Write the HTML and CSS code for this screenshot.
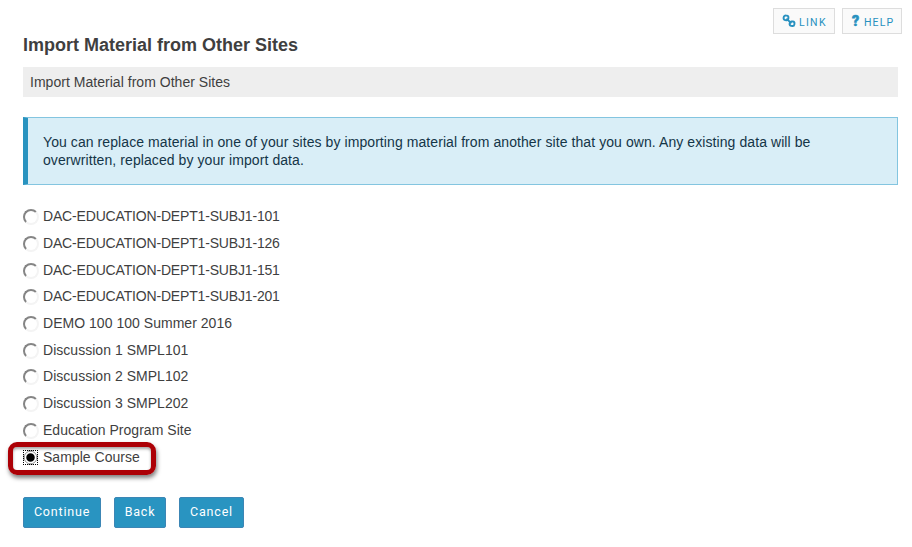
FILE: index.html
```html
<!DOCTYPE html>
<html lang="en">
<head>
<meta charset="utf-8">
<title>Import Material from Other Sites</title>
<link rel="stylesheet" href="styles.css">
</head>
<body>
<nav class="tools">
  <a class="tool link"><svg width="14" height="14" viewBox="0 0 14 14" fill="none" stroke="currentColor" stroke-width="1.9"><rect x="1.6" y="1.6" width="4.8" height="4.6" rx="2" transform="rotate(8 4 4)"/><rect x="7.6" y="7.4" width="4.8" height="4.6" rx="2" transform="rotate(8 10 10)"/><path d="M4.4 4.6l5 4.6"/></svg><span>LINK</span></a>
  <a class="tool help"><b>?</b><span>HELP</span></a>
</nav>
<main>
  <h1>Import Material from Other Sites</h1>
  <div class="crumb">Import Material from Other Sites</div>
  <div class="notice">You can replace material in one of your sites by importing material from another site that you own. Any existing data will be overwritten, replaced by your import data.</div>
  <form>
    <div class="sites">
      <label class="code"><i class="radio"></i><span>DAC-EDUCATION-DEPT1-SUBJ1-101</span></label>
      <label class="code"><i class="radio"></i><span>DAC-EDUCATION-DEPT1-SUBJ1-126</span></label>
      <label class="code"><i class="radio"></i><span>DAC-EDUCATION-DEPT1-SUBJ1-151</span></label>
      <label class="code"><i class="radio"></i><span>DAC-EDUCATION-DEPT1-SUBJ1-201</span></label>
      <label><i class="radio"></i><span>DEMO 100 100 Summer 2016</span></label>
      <label><i class="radio"></i><span>Discussion 1 SMPL101</span></label>
      <label><i class="radio"></i><span>Discussion 2 SMPL102</span></label>
      <label><i class="radio"></i><span>Discussion 3 SMPL202</span></label>
      <label><i class="radio"></i><span>Education Program Site</span></label>
      <label class="selected"><i class="radio checked"></i><span>Sample Course</span></label>
    </div>
    <div class="actions">
      <button type="button" class="continue">Continue</button>
      <button type="button" class="back">Back</button>
      <button type="button" class="cancel">Cancel</button>
    </div>
  </form>
</main>
</body>
</html>
```
FILE: styles.css
```css
*, *::before { box-sizing: border-box; }
body {
  margin: 0;
  background: #fff;
  color: #3f3f3f;
  font: 14px/18px "Liberation Sans", Arial, sans-serif;
  letter-spacing: .03px;
}
.tools {
  display: flex;
  justify-content: flex-end;
  gap: 7px;
  padding: 8px 10px 0 0;
}
.tool {
  display: flex;
  align-items: center;
  height: 26px;
  border: 1px solid #ddd;
  background: #fafafa;
  color: #2891c0;
  font: 10.5px/24px Roboto, sans-serif;
  letter-spacing: 1.3px;
}
.link { width: 62px; padding-left: 8px; }
.link svg { margin: 0 3px 1px 0; }
.help { width: 60px; padding-left: 9px; }
.help b { width: 12px; font: 900 14px/24px Roboto, sans-serif; letter-spacing: 0; -webkit-text-stroke: .6px currentColor; }
.help span { letter-spacing: 1.1px; }
.tool span { padding-top: 3px; }
main { padding: 0 14px 0 23px; }
h1 { margin: 0; font-size: 18px; line-height: 22px; letter-spacing: 0; }
.crumb {
  height: 30px;
  margin-top: 11px;
  padding-left: 7px;
  background: #eee;
  line-height: 30px;
}
.notice {
  height: 68px;
  margin-top: 20px;
  padding: 15px 60px 0 15px;
  border: 1px solid #83c5e0;
  border-left: 5px solid #2993bf;
  background: #d9eef7;
  color: #143547;
  letter-spacing: .08px;
}
.sites { padding-top: 18px; }
.sites label {
  display: flex;
  align-items: center;
  position: relative;
  height: 26.7px;
}
.code { letter-spacing: -.17px; }
.radio {
  width: 16px;
  height: 16px;
  margin: 2px 4px 0 0;
  border: 2px solid;
  border-color: #858585 #f4f4f4 #f4f4f4 #858585;
  border-radius: 50%;
}
.checked {
  width: 15px;
  height: 15px;
  margin: 1px 5px 0 0;
  border: 1px dotted #000;
  border-radius: 0;
  background: radial-gradient(circle at center, #000 0 3.7px, #fff 4.7px 5.5px, #aaa 6px 6.5px, #fff 7px);
}
.selected::before {
  content: "";
  position: absolute;
  left: -15px;
  top: -1px;
  width: 148px;
  height: 33px;
  border: 5px solid #ac0006;
  border-radius: 9px;
  box-shadow: 1px 3px 4px rgba(0, 0, 0, .5), inset 0 2px 3px rgba(0, 0, 0, .35);
}
.actions { display: flex; gap: 13px; padding-top: 27px; }
button {
  height: 31px;
  padding: 0 0 1px;
  border: 1px solid #3c86b5;
  border-radius: 2px;
  background: #2994c1;
  color: #fff;
  font: 12.5px/28px Roboto, sans-serif;
  letter-spacing: .8px;
}
.continue { width: 78px; }
.back { width: 52px; }
.cancel { width: 65px; }
```
